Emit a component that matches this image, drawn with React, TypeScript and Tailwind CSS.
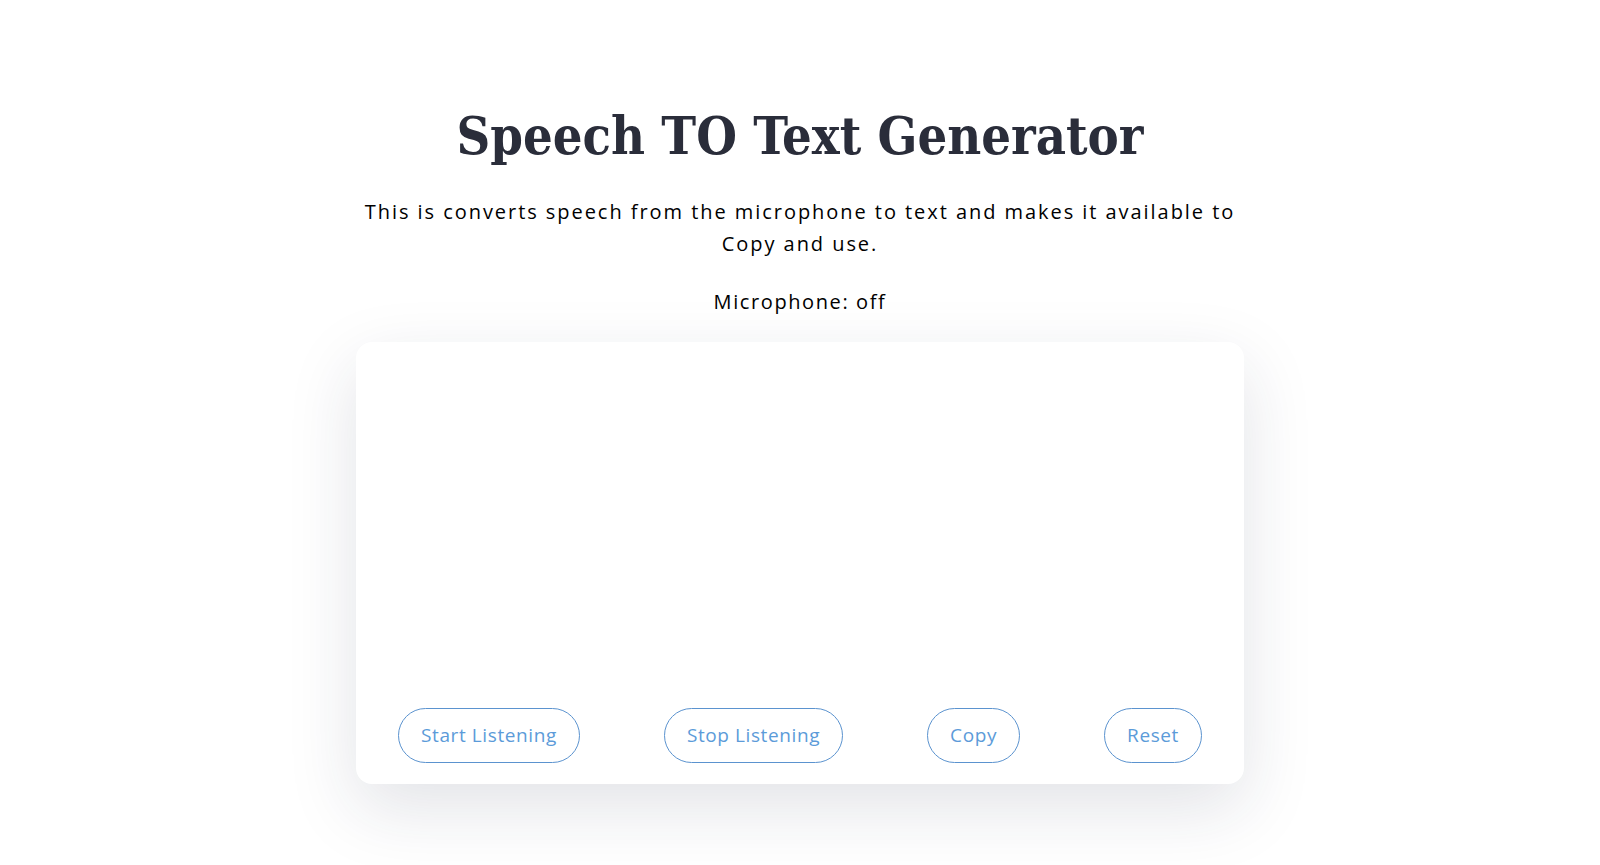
import React from "react";

const buttons = ["Start Listening", "Stop Listening", "Copy", "Reset"];

export default function App() {
  return (
    <div className="min-h-[865px] w-full bg-white">
      <div className="mx-auto flex w-[888px] flex-col items-center pt-[96px]">
        <h1 className="whitespace-nowrap text-center font-['DejaVu_Serif_Condensed','DejaVu_Serif',serif] text-[52px] font-bold leading-[80px] text-[#2a2d3a]">
          Speech TO Text Generator
        </h1>
        <p className="mt-[20px] text-center font-['Open_Sans',sans-serif] text-[20px] leading-[32px] tracking-[1.95px] text-black">
          This is converts speech from the microphone to text and makes it available to Copy and use.
        </p>
        <p className="mt-[26px] text-center font-['Open_Sans',sans-serif] text-[20px] leading-[32px] tracking-[1.6px] text-black">
          Microphone: off
        </p>
        <div className="mt-[24px] flex h-[442px] w-[888px] flex-col justify-end rounded-[16px] bg-white pb-[21px] shadow-[0_24px_70px_rgba(30,40,70,0.13)]">
          <div className="flex justify-around">
            {buttons.map((b) => (
              <button
                key={b}
                className="h-[55px] rounded-full border border-[#5b93cf] bg-white px-[22px] font-['Open_Sans',sans-serif] text-[19px] tracking-[0.6px] text-[#5c9bd9]"
              >
                {b}
              </button>
            ))}
          </div>
        </div>
      </div>
    </div>
  );
}
